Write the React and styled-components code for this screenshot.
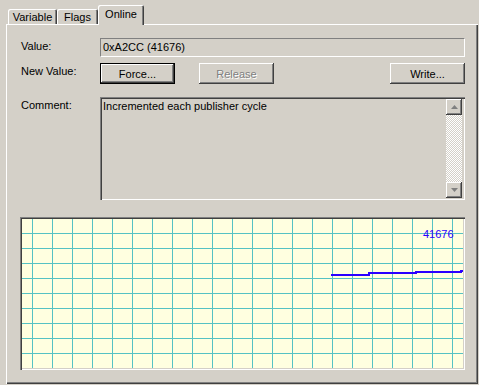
import React from 'react'
import styled, { createGlobalStyle } from 'styled-components'

const Global = createGlobalStyle`
  * { box-sizing: border-box; }
  html, body { margin: 0; padding: 0; background: #d4d0c8; }
  body {
    font-family: "Liberation Sans", Arial, sans-serif;
    font-size: 11px;
    color: #000;
  }
`

export const Window = styled.div`
  width: 479px;
  height: 385px;
  background: #d4d0c8;
  overflow: hidden;
`

export const TabStrip = styled.div`
  display: flex;
  align-items: flex-end;
  height: 24px;
  padding-left: 8px;
  position: relative;
  z-index: 1;
`

export const Tab = styled.div`
  height: ${p => (p.$active ? '20px' : '15px')};
  width: ${p => p.$w}px;
  margin-bottom: ${p => (p.$active ? '-1px' : '0')};
  background: #d4d0c8;
  border-radius: 2px 2px 0 0;
  box-shadow: inset 1px 1px #fff, inset -1px 0 #404040, inset -2px 0 #808080;
  display: flex;
  justify-content: center;
  padding-top: ${p => (p.$active ? '3px' : '2px')};
  line-height: 13px;
`

export const Panel = styled.div`
  margin-left: 6px;
  width: 472px;
  height: 360px;
  box-shadow: inset 1px 1px #fff, inset -1px -1px #404040, inset -2px -2px #808080;
  padding: 14px 13px 0 14px;
  display: flex;
  flex-direction: column;
`

export const Row = styled.div`
  display: flex;
  align-items: flex-start;
  height: ${p => p.$h}px;
  margin-bottom: ${p => p.$mb || 0}px;
`

export const Label = styled.div`
  width: 80px;
  padding: 2px 0 0 1px;
  line-height: 13px;
`

export const Field = styled.div`
  flex: 1;
  height: 100%;
  border-top: 1px solid #808080;
  border-left: 1px solid #808080;
  border-bottom: 1px solid #fff;
  border-right: 1px solid #fff;
  padding: 2px 0 0 2px;
  line-height: 13px;
`

export const Button = styled.div`
  width: 75px;
  height: 21px;
  margin-left: ${p => p.$ml || 0}px;
  display: flex;
  align-items: center;
  justify-content: center;
  border: ${p => (p.$default ? '1px solid #000' : 'none')};
  box-shadow: inset -1px -1px #404040, inset 1px 1px #fff, inset -2px -2px #808080;
  color: ${p => (p.$disabled ? '#808080' : '#000')};
  text-shadow: ${p => (p.$disabled ? '1px 1px #fff' : 'none')};
  padding-top: 1px;
`

export const Spacer = styled.div`
  flex: 1;
`

export const CommentBox = styled.div`
  flex: 1;
  height: 100%;
  padding: 2px;
  display: flex;
  box-shadow: inset 1px 1px #808080, inset 2px 2px #404040, inset -1px -1px #fff;
`

export const CommentText = styled.div`
  flex: 1;
  padding: 1px 0 0 1px;
  line-height: 13px;
`

export const ScrollBar = styled.div`
  width: 16px;
  display: flex;
  flex-direction: column;
  margin-right: 1px;
`

export const ScrollButton = styled.div`
  height: 16px;
  display: flex;
  align-items: center;
  justify-content: center;
  background: #d4d0c8;
  box-shadow: inset -1px -1px #404040, inset 1px 1px #fff, inset -2px -2px #808080;
`

export const Track = styled.div`
  flex: 1;
  background: repeating-conic-gradient(#fff 0 25%, #d4d0c8 0 50%) 0 0 / 2px 2px;
`

export const Chart = styled.div`
  width: 445px;
  height: 153px;
  padding: 2px;
  box-shadow: inset 1px 1px #808080, inset 2px 2px #404040, inset -1px -1px #fff;
`

function Arrow({ down }) {
  return (
    <svg width="7" height="4" viewBox="0 0 7 4">
      <polygon
        points={down ? '0,0 7,0 3.5,4' : '3.5,0 7,4 0,4'}
        fill="#808080"
      />
    </svg>
  )
}

function Graph() {
  const w = 441
  const h = 149
  const xs = []
  for (let x = 10; x < w; x += 20) xs.push(x)
  const ys = []
  for (let y = 14; y < h; y += 15) ys.push(y)
  return (
    <svg width={w} height={h} style={{ display: 'block' }}>
      <rect width={w} height={h} fill="#ffffe0" />
      {xs.map(x => (
        <line key={'x' + x} x1={x + 0.5} y1="0" x2={x + 0.5} y2={h} stroke="#55c2c4" />
      ))}
      {ys.map(y => (
        <line key={'y' + y} x1="0" y1={y + 0.5} x2={w} y2={y + 0.5} stroke="#55c2c4" />
      ))}
      <polyline
        points="309,56 347,56 347,54 394,54 394,53 439,53 439,52 441,52"
        fill="none"
        stroke="#2a00ff"
        strokeWidth="2"
      />
      <text
        x="401"
        y="19"
        fill="#2a00ff"
        fontSize="11"
        fontFamily="Liberation Sans, Arial, sans-serif"
      >
        41676
      </text>
    </svg>
  )
}

export default function App() {
  return (
    <>
      <Global />
      <Window>
        <TabStrip>
          <Tab $w={49}>Variable</Tab>
          <Tab $w={41}>Flags</Tab>
          <Tab $w={46} $active>Online</Tab>
        </TabStrip>
        <Panel>
          <Row $h={19} $mb={6}>
            <Label>Value:</Label>
            <Field>0xA2CC (41676)</Field>
          </Row>
          <Row $h={21} $mb={13}>
            <Label>New Value:</Label>
            <Button $default>Force...</Button>
            <Button $ml={24} $disabled>Release</Button>
            <Spacer />
            <Button>Write...</Button>
          </Row>
          <Row $h={103} $mb={17}>
            <Label>Comment:</Label>
            <CommentBox>
              <CommentText>Incremented each publisher cycle</CommentText>
              <ScrollBar>
                <ScrollButton><Arrow /></ScrollButton>
                <Track />
                <ScrollButton><Arrow down /></ScrollButton>
              </ScrollBar>
            </CommentBox>
          </Row>
          <Chart>
            <Graph />
          </Chart>
        </Panel>
      </Window>
    </>
  )
}
